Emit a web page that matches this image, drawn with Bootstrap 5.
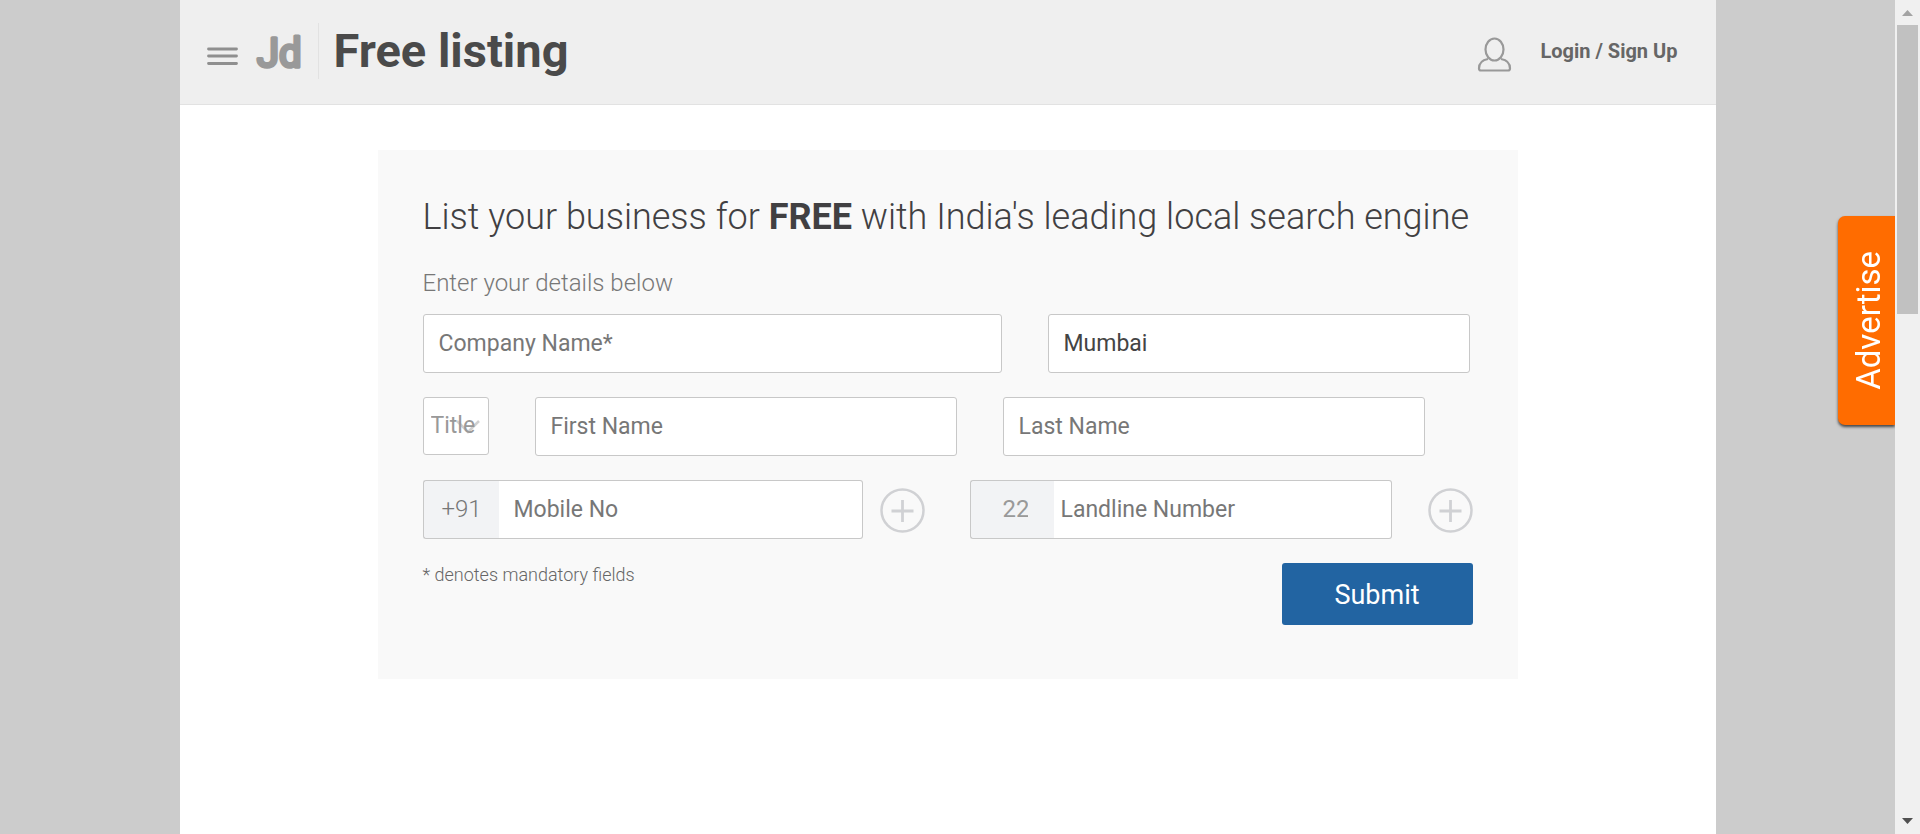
<!DOCTYPE html>
<html lang="en">
<head>
<meta charset="utf-8">
<meta name="viewport" content="width=device-width, initial-scale=1">
<title>Free listing</title>
<link href="https://cdn.jsdelivr.net/npm/bootstrap@5.3.0/dist/css/bootstrap.min.css" rel="stylesheet">
<style>
  body { font-family: Roboto, "Liberation Sans", sans-serif; background: #ccc; color: #444; }
  .page-shell { max-width: 1536px; }
  .top-bar { background: #efefef; border-bottom: 1px solid #e2e2e2; height: 105px; padding: 0 38px 2px 27px; }
  .logo-link { margin-left: 16px; }
  .bar-divider { width: 1px; height: 56px; background: #e2e2e2; margin: 0 15px 0 16px; }
  .page-title { font-size: 47px; line-height: 48px; font-weight: 700; color: #4a4a4a; }
  .login-link { font-size: 20px; line-height: 24px; font-weight: 700; color: #666; gap: 28px; }
  .listing-panel { max-width: 1140px; background: #f9f9f9; padding: 45px 45px 54px; margin-top: 45px; }
  .panel-title { font-size: 36px; line-height: 44px; font-weight: 300; margin-bottom: 29px; color: #414042; }
  .panel-sub { font-size: 24px; line-height: 30px; font-weight: 300; margin-bottom: 16px; color: #777; }
  .field-row { gap: 46px; margin-bottom: 24px; }
  .city-row { padding-right: 3px; }
  .field, .field:focus { height: 59px; font-size: 23px; line-height: 30px; color: #444; background-color: #fff; border: 1px solid #c8c8c8; border-radius: 3px; padding: 0 15px; box-shadow: none; }
  .field::placeholder { color: #777; opacity: 1; }
  .w-field { flex: 0 1 422px; min-width: 0; }
  .w-title, .w-title:focus { flex: 0 0 66px; height: 58px; color: #999; padding: 0 0 0 7px; background-image: url("data:image/svg+xml,%3Csvg xmlns='http://www.w3.org/2000/svg' viewBox='0 0 24 14' fill='none' stroke='%23d0d0d0' stroke-width='2.500'%3E%3Cpath d='M1 1l11 11L23 1'/%3E%3C/svg%3E"); background-position: 32px 22px; background-size: 24px 14px; }
  .w-mobile { flex: 0 1 440px; min-width: 0; }
  .prefix, .prefix:focus { background: #f2f3f5; border: 1px solid #c8c8c8; border-right: 0; border-radius: 3px 0 0 3px; font-size: 24px; line-height: 30px; height: 59px; outline: 0; }
  .prefix-country { width: 77px; padding: 0 0 2px; justify-content: center; font-weight: 300; color: #777; }
  .prefix-area { width: 84px; padding: 0 26px 2px 32px; color: #999; }
  .joined, .joined:focus { border-left: 0; }
  .joined-tight, .joined-tight:focus { padding-left: 7px; }
  .add-btn { flex: 0 0 45px; padding: 2px 0 0; line-height: 1; }
  .phone-row { margin-bottom: 24px; }
  .mobile-group { gap: 17px; flex: 0 1 502px; }
  .landline-group { gap: 36px; flex: 0 1 503px; margin-left: 45px; }
  .note { font-size: 18px; line-height: 24px; font-weight: 300; color: #666; }
  .submit-btn, .submit-btn:hover { width: 191px; height: 62px; background: #2264a2; color: #fff; font-size: 27px; border: 0; border-radius: 3px; padding: 2px 0 0; }
  .advert-tab { position: fixed; right: 25px; top: 216px; width: 57px; height: 209px; background: #ff6c00; color: #fff; border-radius: 7px 0 0 7px; box-shadow: 0 2px 3px #444; clip-path: inset(-6px 0 -6px -6px); font-size: 33px; line-height: 36px; padding-left: 4px; }
  .advert-tab span { writing-mode: vertical-rl; transform: rotate(180deg); }
  .scroll-rail { position: sticky; top: 0; width: 25px; height: 100vh; background: #f0f0f0; flex: none; padding: 10px 2px; }
  .rail-thumb { height: 289px; background: #c1c1c1; margin-top: 9px; }
</style>
</head>
<body>
<div class="d-flex align-items-start">
  <div class="flex-grow-1">
    <div class="page-shell bg-white min-vh-100 mx-auto">
      <header class="top-bar d-flex align-items-center">
        <button class="btn p-0 border-0 lh-1" type="button" aria-label="Menu">
          <svg width="31" height="30" viewBox="0 0 31 30" fill="none" stroke="#8f8f8f" stroke-width="2.800" stroke-linecap="round"><path d="M1.500 13h28M1.500 20h28M1.500 27.500h28"/></svg>
        </button>
        <a class="logo-link text-decoration-none lh-1" href="#" aria-label="Jd">
          <svg width="48" height="48" viewBox="0 0 48 48" class="d-block overflow-visible"><text x="3" y="40" font-family="Roboto, sans-serif" font-size="40" fill="#999" stroke="#999" stroke-width="3.500" stroke-linejoin="round">Jd</text></svg>
        </a>
        <div class="bar-divider"></div>
        <h1 class="page-title mb-0">Free listing</h1>
        <a class="login-link ms-auto d-flex align-items-center text-decoration-none" href="#">
          <svg width="35" height="42" viewBox="0 0 35 42" fill="none" stroke="#999" stroke-width="2.200"><ellipse cx="17.500" cy="19.500" rx="9" ry="11"/><path d="M11 29C5 30 2 33 2 38.500q0 2 2 2h27q2 0 2-2C33 33 30 30 24 29"/></svg>
          <span>Login / Sign Up</span>
        </a>
      </header>
      <main class="px-3">
        <form class="listing-panel mx-auto">
          <h2 class="panel-title">List your business for <strong class="fw-bold">FREE</strong> with India's leading local search engine</h2>
          <p class="panel-sub">Enter your details below</p>
          <div class="field-row city-row d-flex">
            <input class="form-control field flex-fill w-auto" type="text" placeholder="Company Name*" aria-label="Company Name">
            <input class="form-control field w-field" type="text" value="Mumbai" aria-label="City">
          </div>
          <div class="field-row d-flex">
            <select class="form-select field w-title" aria-label="Title"><option>Title</option><option>Mr</option><option>Ms</option><option>Dr</option></select>
            <input class="form-control field w-field" type="text" placeholder="First Name" aria-label="First Name">
            <input class="form-control field w-field" type="text" placeholder="Last Name" aria-label="Last Name">
          </div>
          <div class="phone-row d-flex">
            <div class="mobile-group d-flex align-items-center">
              <div class="input-group flex-nowrap w-mobile">
                <label class="input-group-text prefix prefix-country" for="mobile">+91</label>
                <input class="form-control field joined" id="mobile" type="tel" placeholder="Mobile No">
              </div>
              <button class="btn border-0 add-btn" type="button" aria-label="Add mobile number">
                <svg class="d-block" width="45" height="45" viewBox="0 0 45 45" fill="none" stroke="#d0d1d4" stroke-width="2.500"><circle cx="22.500" cy="22.500" r="21"/><path d="M22.500 12v22M11.500 23h22" stroke-width="2.800"/></svg>
              </button>
            </div>
            <div class="landline-group d-flex align-items-center">
              <div class="d-flex w-field">
                <input class="prefix prefix-area" type="text" value="22" aria-label="Area code">
                <input class="form-control field joined joined-tight rounded-start-0" type="tel" placeholder="Landline Number" aria-label="Landline Number">
              </div>
              <button class="btn border-0 add-btn" type="button" aria-label="Add landline number">
                <svg class="d-block" width="45" height="45" viewBox="0 0 45 45" fill="none" stroke="#d0d1d4" stroke-width="2.500"><circle cx="22.500" cy="22.500" r="21"/><path d="M22.500 12v22M11.500 23h22" stroke-width="2.800"/></svg>
              </button>
            </div>
          </div>
          <div class="d-flex justify-content-between align-items-start">
            <p class="note mb-0">* denotes mandatory fields</p>
            <button class="btn submit-btn" type="button">Submit</button>
          </div>
        </form>
      </main>
    </div>
  </div>
  <div class="scroll-rail d-flex flex-column" aria-hidden="true">
    <svg class="mx-auto flex-shrink-0" width="11" height="6" viewBox="0 0 11 6"><path d="M0 6 5.500 0 11 6z" fill="#a3a3a3"/></svg>
    <div class="rail-thumb"></div>
    <svg class="mx-auto mt-auto flex-shrink-0" width="11" height="6" viewBox="0 0 11 6"><path d="M0 0 5.500 6 11 0z" fill="#505050"/></svg>
  </div>
</div>
<a class="advert-tab d-flex align-items-center justify-content-center text-decoration-none" href="#"><span>Advertise</span></a>
<script src="https://cdn.jsdelivr.net/npm/bootstrap@5.3.0/dist/js/bootstrap.bundle.min.js"></script>
</body>
</html>
